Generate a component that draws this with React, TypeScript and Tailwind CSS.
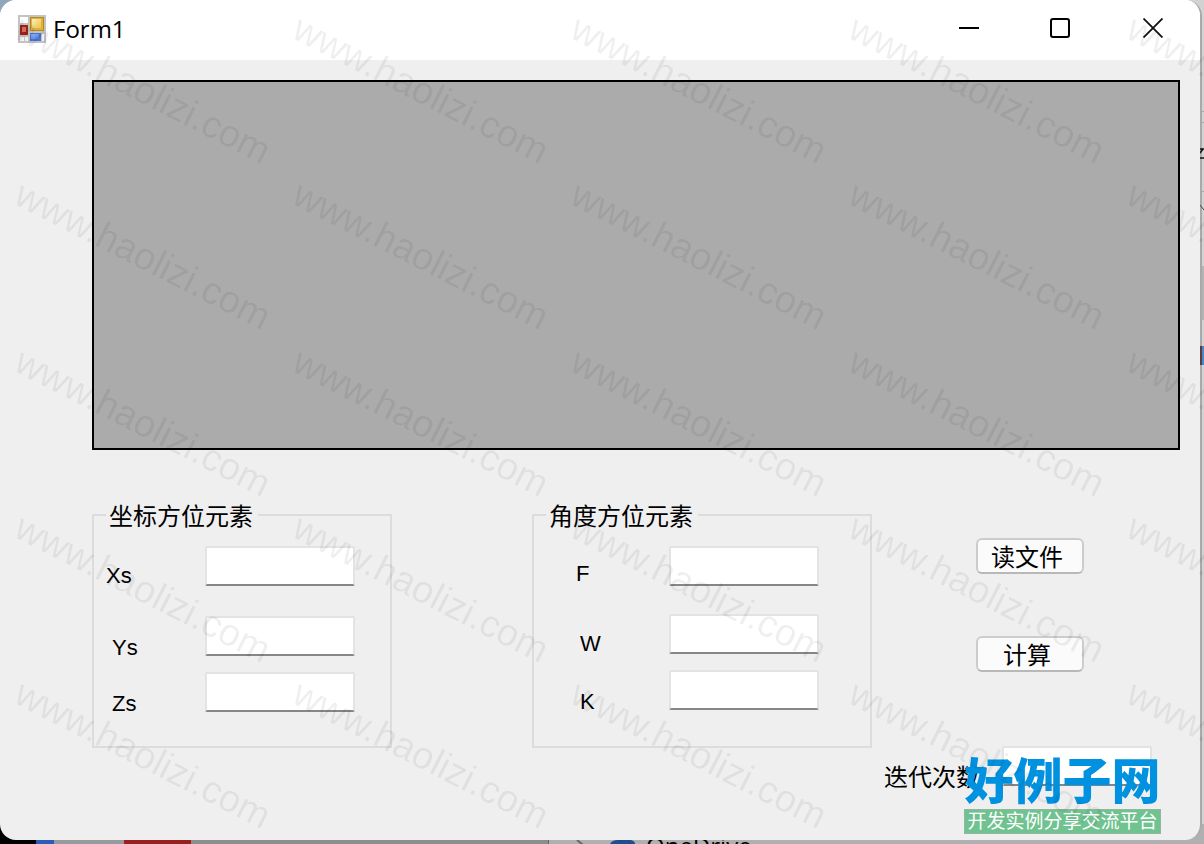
import React from "react";

interface Field {
  id: string;
  label: string;
  labelClass: string;
  inputClass: string;
}

const positionFields: Field[] = [
  { id: "xs", label: "Xs", labelClass: "", inputClass: "" },
  { id: "ys", label: "Ys", labelClass: "mt-12 pl-1.5", inputClass: "mt-[30px]" },
  { id: "zs", label: "Zs", labelClass: "mt-8 pl-1.5", inputClass: "mt-4" },
];

const angleFields: Field[] = [
  { id: "f", label: "F", labelClass: "", inputClass: "" },
  { id: "w", label: "W", labelClass: "mt-[46px] pl-1", inputClass: "mt-7" },
  { id: "k", label: "K", labelClass: "mt-[34px] pl-1", inputClass: "mt-4" },
];

const inputStyle =
  "block h-10 w-[150px] rounded-[2px] border-2 border-[#e3e3e3] border-b-[#868686] bg-white px-1 text-[22px] outline-none";
const buttonStyle =
  "block h-9 w-[108px] rounded-md border-2 border-[#cccccc] border-b-[#b8b8b8] bg-[#fbfbfb] pr-1.5 pt-1 text-2xl leading-7";

interface GroupProps {
  title: string;
  fields: Field[];
  className: string;
  labelsClass: string;
}

const Group = ({ title, fields, className, labelsClass }: GroupProps) => (
  <fieldset
    className={`h-[249px] shrink-0 border-2 border-[#dcdcdc] pl-3 ${className}`}
  >
    <legend className="pl-[3px] pr-[5px] pt-1 text-2xl leading-7">{title}</legend>
    <div className="flex flex-row items-start">
      <div
        className={`flex flex-col font-['Liberation_Sans',sans-serif] text-[22px] leading-6 ${labelsClass}`}
      >
        {fields.map((f) => (
          <label key={f.id} htmlFor={f.id} className={f.labelClass}>
            {f.label}
          </label>
        ))}
      </div>
      <div className="flex flex-col pt-[15px]">
        {fields.map((f) => (
          <input
            key={f.id}
            id={f.id}
            type="text"
            className={`${inputStyle} ${f.inputClass}`}
          />
        ))}
      </div>
    </div>
  </fieldset>
);

const FormIcon = () => (
  <svg className="h-7 w-7" viewBox="0 0 28 28">
    <defs>
      <linearGradient id="gold" x1="0" y1="0" x2="1" y2="1">
        <stop offset="0" stopColor="#fdf0b8" />
        <stop offset="1" stopColor="#ecc24a" />
      </linearGradient>
      <linearGradient id="blue" x1="0" y1="0" x2="1" y2="1">
        <stop offset="0" stopColor="#8fb4f5" />
        <stop offset="1" stopColor="#4f7ade" />
      </linearGradient>
    </defs>
    <rect width="28" height="28" fill="#c3c3c3" />
    <rect x="2" y="2" width="8" height="6" fill="#fff" />
    <rect x="2" y="22" width="4" height="4" fill="#f6f6f6" />
    <rect x="7" y="22" width="3" height="4" fill="#f0f0f0" />
    <rect x="24" y="19" width="2" height="7" fill="#f0f0f0" />
    <rect x="2" y="10" width="8" height="10" fill="#9c231b" />
    <rect x="4" y="12" width="4" height="5" fill="#d4695c" />
    <rect x="12" y="2" width="14" height="14" fill="#b88a1c" />
    <rect x="13" y="3" width="12" height="12" fill="#dfb13a" />
    <rect x="14" y="4" width="9" height="9" fill="url(#gold)" />
    <rect x="12" y="18" width="11" height="8" fill="#4a73d6" />
    <rect x="13" y="19" width="8" height="5" fill="url(#blue)" />
  </svg>
);

const TitleBar = () => (
  <header className="flex h-[60px] flex-row items-center bg-white pb-0.5 pl-[18px]">
    <FormIcon />
    <h1 className="flex-1 pl-[7px] font-['Open_Sans',sans-serif] text-2xl leading-8">
      Form1
    </h1>
    <div className="flex flex-row pb-0.5">
      <button aria-label="Minimize" className="flex h-14 w-[91px] items-center justify-center">
        <svg className="h-5 w-5" viewBox="0 0 20 20">
          <path d="M0 10H20" stroke="#000" strokeWidth="2" />
        </svg>
      </button>
      <button aria-label="Maximize" className="flex h-14 w-[92px] items-center justify-center">
        <svg className="h-5 w-5" viewBox="0 0 20 20">
          <rect x="1" y="1" width="18" height="18" rx="2" fill="none" stroke="#000" strokeWidth="2" />
        </svg>
      </button>
      <button aria-label="Close" className="flex h-14 w-[94px] items-center justify-center">
        <svg className="h-5 w-5" viewBox="0 0 20 20">
          <path d="M0.5 0.5L19.5 19.5M19.5 0.5L0.5 19.5" stroke="#111" strokeWidth="1.8" />
        </svg>
      </button>
    </div>
  </header>
);

// what shows of the desktop around the window edges
const Desktop = () => (
  <div className="absolute inset-0 overflow-hidden bg-[#d2d2d2]">
    <div className="absolute left-0 top-0 h-5 w-5 bg-[#8fa6bd]" />
    <div className="absolute right-0 top-[111px] h-px w-1 bg-[#aaaaaa]" />
    <div className="absolute right-0 top-[122px] h-px w-1 bg-[#aaaaaa]" />
    <div className="absolute right-0 top-[191px] h-px w-1 bg-[#aaaaaa]" />
    <div className="absolute right-0 top-[266px] h-[54px] w-1 bg-[#b4b4b4]" />
    <div className="absolute bottom-0 left-0 flex h-5 w-full flex-row bg-[#b0b0b0]">
      <div className="w-9 bg-black" />
      <div className="w-[18px] bg-[#2a5db8]" />
      <div className="w-[70px] bg-[#979b9f]" />
      <div className="w-[67px] bg-[#972020]" />
      <div className="w-[358px] border-r border-[#666666] bg-[#8b8d90]" />
    </div>
    <svg className="absolute bottom-0 left-[570px] h-1 w-20" viewBox="0 0 80 4">
      <path d="M7 0L13 5" stroke="#666" strokeWidth="2" />
      <path d="M40 4Q42 0 48 0H61Q65 1 65 4Z" fill="#214c8d" />
    </svg>
    <div className="absolute bottom-0 left-[646px] h-1 w-40 overflow-hidden">
      <span className="block font-['Open_Sans',sans-serif] text-2xl leading-3">OneDrive</span>
    </div>
  </div>
);

const EdgeMarks = () => (
  <svg className="pointer-events-none absolute right-0 top-36 h-56 w-1" viewBox="0 0 4 224">
    <path d="M0 5H4M0 14H4M3 5L0 9" stroke="#111" strokeWidth="1.5" />
    <path d="M0 61L4 66" stroke="#444" strokeWidth="1" />
    <rect x="0" y="202" width="2" height="19" fill="#5a3a3a" />
    <rect x="2" y="202" width="2" height="19" fill="#4a86c8" />
  </svg>
);

const Watermark = () => (
  <svg className="pointer-events-none absolute inset-0 h-full w-full">
    {[37, 203, 370, 536, 702].map((y) =>
      [12, 290, 568, 846, 1124].map((x) => (
        <text
          key={`${x}-${y}`}
          transform={`translate(${x} ${y}) rotate(27)`}
          className="fill-black/7 font-['Liberation_Sans',sans-serif] text-[38px]"
        >
          www.haolizi.com
        </text>
      )),
    )}
  </svg>
);

const SiteLogo = () => (
  <div className="pointer-events-none absolute bottom-[10px] right-[43px] w-[197px] text-center">
    <div className="whitespace-nowrap text-[49px] font-black leading-[54px] text-[#0092e0]">
      好例子网
    </div>
    <div className="h-[25px] whitespace-nowrap border border-[#8fb89f] bg-[#70c290] text-[19px] leading-6 text-white">
      开发实例分享交流平台
    </div>
  </div>
);

export default function App() {
  return (
    <div className="relative flex min-h-screen flex-col overflow-hidden pb-1 pr-0.5 font-['Liberation_Sans','Noto_Sans_CJK_SC',sans-serif] text-black">
      <Desktop />
      <div className="relative flex flex-1 flex-col overflow-hidden rounded-2xl border-r-2 border-[#a9a9a9] bg-[#efefef]">
        <TitleBar />
        <main className="pb-[54px] pl-[92px] pt-5">
          <div className="mr-5 h-[370px] border-2 border-black bg-[#ababab]" />
          <div className="mt-[49px] flex flex-row items-start">
            <Group
              title="坐标方位元素"
              fields={positionFields}
              className="w-[300px]"
              labelsClass="w-[99px] pt-[33px]"
            />
            <Group
              title="角度方位元素"
              fields={angleFields}
              className="ml-[140px] w-[340px]"
              labelsClass="w-[123px] pl-[30px] pt-[31px]"
            />
            <div className="ml-3 flex flex-col pt-[39px]">
              <div className="flex flex-col gap-[62px] pl-[92px]">
                <button className={buttonStyle}>读文件</button>
                <button className={buttonStyle}>计算</button>
              </div>
              <div className="mt-[74px] flex flex-row items-end gap-[22px]">
                <label htmlFor="iterations" className="whitespace-nowrap text-2xl leading-4">
                  迭代次数
                </label>
                <input id="iterations" type="text" className={inputStyle} />
              </div>
            </div>
          </div>
        </main>
      </div>
      <EdgeMarks />
      <SiteLogo />
      <Watermark />
    </div>
  );
}
